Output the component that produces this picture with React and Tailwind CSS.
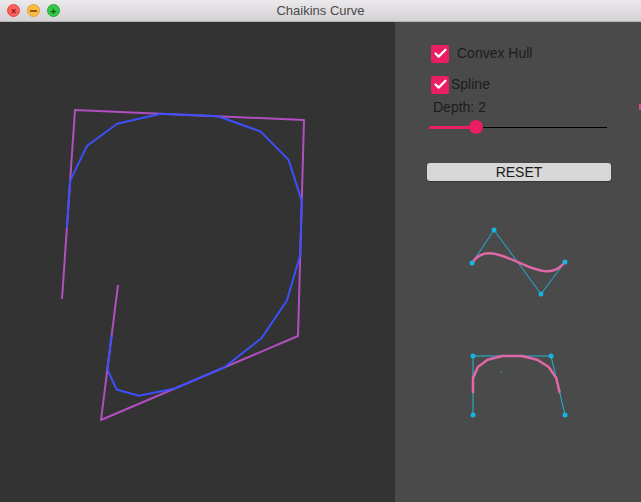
import { Check } from 'lucide-react';

const hullPoints = [
    [62, 299],
    [75, 110],
    [304, 120],
    [298, 336],
    [101, 420],
    [118, 285],
];

const archPoints = [
    [473, 415],
    [473, 356],
    [551, 356],
    [565, 415],
];

// one pass of Chaikin corner cutting on an open polyline
const chaikin = (pts, depth) => {
    let out = pts;
    for (let d = 0; d < depth; d++) {
        const next = [];
        for (let i = 0; i < out.length - 1; i++) {
            const [x0, y0] = out[i];
            const [x1, y1] = out[i + 1];
            next.push([0.75 * x0 + 0.25 * x1, 0.75 * y0 + 0.25 * y1]);
            next.push([0.25 * x0 + 0.75 * x1, 0.25 * y0 + 0.75 * y1]);
        }
        out = next;
    }
    return out;
};

const toStr = (pts) => pts.map((p) => p.join(',')).join(' ');

const TitleBar = () => (
    <div className="h-[22px] flex items-center relative bg-gradient-to-b from-[#ebe9eb] to-[#d4d2d4] border-b border-[#b4b4b4]">
        <div className="flex items-center gap-[7px] pl-[7px]">
            <span className="w-[13px] h-[13px] rounded-full bg-[#fc605b] border border-[#de4a45] flex items-center justify-center text-[10px] leading-none font-bold text-[#8c1a13]">×</span>
            <span className="w-[13px] h-[13px] rounded-full bg-[#fdbc40] border border-[#de9f2b] flex items-center justify-center">
                <span className="w-[7px] h-[2px] bg-[#985712]" />
            </span>
            <span className="w-[13px] h-[13px] rounded-full bg-[#34c84a] border border-[#27a63a] flex items-center justify-center text-[11px] leading-none font-bold text-[#0b650d]">+</span>
        </div>
        <span className="absolute left-0 right-0 text-center text-[13px] text-[#4a4a4a] font-['Liberation_Sans',sans-serif]">
            Chaikins Curve
        </span>
    </div>
);

const CheckBox = () => (
    <span className="w-[18px] h-[18px] rounded-[2px] bg-[#e91e63] flex items-center justify-center">
        <Check size={15} strokeWidth={3.5} color="white" />
    </span>
);

const Panel = () => (
    <div className="w-[246px] bg-[#4a4a4a] relative pl-[32px] pr-[30px] pt-[21px] font-['Liberation_Sans',sans-serif] text-[14px] text-[#1c1c1c]">
        <div className="flex items-center gap-2 pl-[4px]">
            <CheckBox />
            <span>Convex Hull</span>
        </div>
        <div className="flex items-center gap-[2px] pl-[4px] mt-[10px]">
            <CheckBox />
            <span>Spline</span>
        </div>
        <div className="pl-[6px] mt-[4px] leading-[16px]">Depth: 2</div>
        <div className="relative h-[16px] mt-[4px] ml-[2px] mr-[4px] flex items-center">
            <div className="h-[1px] w-full bg-black" />
            <div className="absolute left-0 top-[6.5px] h-[3px] w-[48px] bg-[#e91e63]" />
            <div className="absolute left-[40px] top-[1px] w-[14px] h-[14px] rounded-full bg-[#e91e63]" />
        </div>
        <button className="mt-[28px] w-[184px] h-[18px] rounded-[3px] bg-[#d6d7d6] text-[14px] leading-[18px] text-[#1c1c1c] shadow-[0_1px_1px_rgba(0,0,0,0.3)]">
            RESET
        </button>
        <div className="absolute right-0 top-[82px] w-[2px] h-[6px] bg-[#d24a8c]" />
    </div>
);

const App = () => {
    const spline = chaikin(hullPoints, 2);
    const arch = chaikin(archPoints, 2);
    const wave = [
        [472, 263],
        [494, 230],
        [541, 294],
        [565, 262],
    ];

    return (
        <div className="w-[641px] h-[502px] flex flex-col overflow-hidden bg-[#333333]">
            <TitleBar />
            <div className="flex-1 flex relative">
                <div className="flex-1 bg-[#333333]" />
                <Panel />
                <svg className="absolute left-0 top-[-22px] pointer-events-none" width="641" height="502">
                    <polyline points={toStr(hullPoints)} fill="none" stroke="#b24fc0" strokeWidth="2" strokeLinejoin="round" />
                    <polyline points={toStr(spline)} fill="none" stroke="#3c50fb" strokeWidth="2" strokeLinejoin="round" />

                    <polyline points={toStr(wave)} fill="none" stroke="#22b3de" strokeWidth="1" />
                    <path
                        d={`M${wave[0].join(',')} C${wave[1].join(',')} ${wave[2].join(',')} ${wave[3].join(',')}`}
                        fill="none"
                        stroke="#e068a6"
                        strokeWidth="2.5"
                    />
                    {wave.map(([x, y], i) => (
                        <circle key={i} cx={x} cy={y} r="2.5" fill="#14b4e4" />
                    ))}

                    <polyline points={toStr(archPoints)} fill="none" stroke="#22b3de" strokeWidth="1" />
                    <polyline points={toStr(arch)} fill="none" stroke="#e068a6" strokeWidth="2.5" strokeLinejoin="round" />
                    {archPoints.map(([x, y], i) => (
                        <circle key={i} cx={x} cy={y} r="2.5" fill="#14b4e4" />
                    ))}
                    <circle cx="501.5" cy="372" r="0.7" fill="#14b4e4" />
                </svg>
            </div>
        </div>
    );
};

export default App;
